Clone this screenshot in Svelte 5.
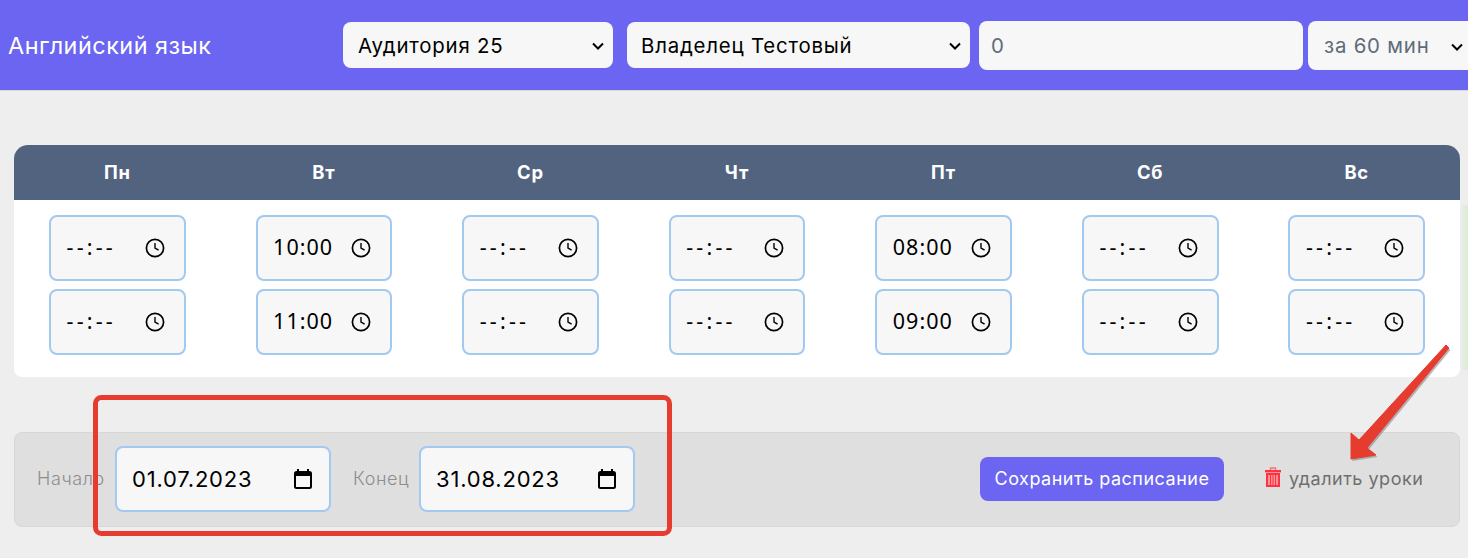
<script lang="ts">
  const days = [
    { name: "Пн", times: ["--:--", "--:--"] },
    { name: "Вт", times: ["10:00", "11:00"] },
    { name: "Ср", times: ["--:--", "--:--"] },
    { name: "Чт", times: ["--:--", "--:--"] },
    { name: "Пт", times: ["08:00", "09:00"] },
    { name: "Сб", times: ["--:--", "--:--"] },
    { name: "Вс", times: ["--:--", "--:--"] }
  ];
</script>

<div class="page">
  <header class="topbar">
    <div class="title">Английский язык</div>
    <select class="field room"><option>Аудитория 25</option></select>
    <select class="field owner"><option>Владелец Тестовый</option></select>
    <input class="field price" value="0" />
    <select class="field period"><option>за 60 мин</option></select>
  </header>

  <main class="content">
    <section class="schedule">
      <div class="head">
        {#each days as day}
          <div class="day-name">{day.name}</div>
        {/each}
      </div>
      <div class="body">
        {#each days as day}
          <div class="day">
            {#each day.times as time}
              <div class="time" class:empty={time === "--:--"}>
                <span class="value">{time}</span>
                <svg class="clock" viewBox="0 0 20 20" width="20" height="20">
                  <circle cx="10" cy="10" r="8.6" fill="none" stroke="#000" stroke-width="1.7" />
                  <path d="M10 5v5l3.6 2.2" fill="none" stroke="#000" stroke-width="1.4" />
                </svg>
              </div>
            {/each}
          </div>
        {/each}
      </div>
    </section>

    <section class="footer">
      <span class="label start">Начало</span>
      <div class="date">
        <span>01.07.2023</span>
        <svg viewBox="0 0 20 20" width="20" height="20">
          <path d="M5 0v3M15 0v3" stroke="#000" stroke-width="2" />
          <rect x="2" y="3" width="16" height="16" rx="1.5" fill="none" stroke="#000" stroke-width="2" />
          <rect x="2" y="3" width="16" height="4" fill="#000" />
        </svg>
      </div>
      <span class="label end">Конец</span>
      <div class="date">
        <span>31.08.2023</span>
        <svg viewBox="0 0 20 20" width="20" height="20">
          <path d="M5 0v3M15 0v3" stroke="#000" stroke-width="2" />
          <rect x="2" y="3" width="16" height="16" rx="1.5" fill="none" stroke="#000" stroke-width="2" />
          <rect x="2" y="3" width="16" height="4" fill="#000" />
        </svg>
      </div>
      <button class="save">Сохранить расписание</button>
      <span class="remove">
        <svg class="trash" viewBox="0 0 16 20" width="16" height="20">
          <path d="M5.5 3V1h5v2" fill="none" stroke="#f9707a" stroke-width="1.4" />
          <rect x="0" y="3" width="16" height="2.4" fill="#ff3340" />
          <rect x="2" y="7" width="12" height="12" fill="#ff8f98" stroke="#ff3340" stroke-width="2" />
          <path d="M5.5 8v10M8 8v10M10.5 8v10" stroke="#ff3340" stroke-width="1" />
        </svg>
        удалить уроки
      </span>
    </section>
  </main>

  <div class="edge"></div>

  <svg class="marks" viewBox="0 0 1468 558" width="1468" height="558">
    <rect x="95.5" y="397.5" width="574" height="136" rx="6" fill="none" stroke="#e53c2f" stroke-width="5" />
    <path d="M1446 345 L1359 440 L1351 433 L1351 459 L1376 455 L1367 448 L1449 348 Z" fill="#7f7f7f" transform="translate(1.5 2)" opacity="0.55" />
    <path d="M1446 345 L1359 440 L1351 433 L1351 459 L1376 455 L1367 448 L1449 348 Z" fill="#e53c2f" stroke="#e53c2f" stroke-width="1" stroke-linejoin="round" />
  </svg>
</div>

<style>
  :global(body) {
    margin: 0;
    overflow: hidden;
  }

  .page {
    position: relative;
    width: 1468px;
    height: 558px;
    overflow: hidden;
    background: #eeeeee;
    font-family: Inter, "Liberation Sans", sans-serif;
  }

  .topbar {
    display: flex;
    align-items: center;
    width: 1500px;
    height: 91px;
    box-sizing: border-box;
    padding-left: 8px;
    background: #6b65f1;
    border-bottom: 1px solid #d9d9d9;
  }

  .title {
    width: 335px;
    height: 46px;
    flex: none;
    color: #fff;
    font-size: 23.4px;
    letter-spacing: 0.5px;
    line-height: 48px;
  }

  .field {
    box-sizing: border-box;
    border: none;
    border-radius: 8px;
    background-color: #f7f7f7;
    font-family: inherit;
    font-size: 20.4px;
    letter-spacing: 0.8px;
    color: #000;
    flex: none;
  }

  select.field {
    appearance: none;
    background-repeat: no-repeat;
    background-size: 12px 8px;
    background-image: url("data:image/svg+xml,%3Csvg xmlns='http://www.w3.org/2000/svg' viewBox='0 0 12 8'%3E%3Cpath d='M1 1.5l5 5 5-5' fill='none' stroke='%23000' stroke-width='2'/%3E%3C/svg%3E");
  }

  .room { width: 270px; height: 46px; padding-left: 15px; background-position: 249px 20px; }
  .owner { width: 343px; height: 46px; margin-left: 14px; padding-left: 14px; background-position: 322px 20px; }
  .price {
    width: 324px;
    height: 49px;
    margin-left: 9px;
    padding: 0 12px;
    color: #5f6b7a;
  }
  select.period {
    width: 168px;
    height: 49px;
    margin-left: 5px;
    padding-left: 16px;
    color: #5f6b7a;
    background-position: 143px 22px;
  }

  .content {
    padding: 54px 8px 0 14px;
  }

  .schedule {
    background: #fff;
    border-radius: 14px 14px 8px 8px;
    overflow: hidden;
  }

  .head {
    display: grid;
    grid-template-columns: repeat(7, 1fr);
    height: 55px;
    background: #52637f;
  }

  .day-name {
    text-align: center;
    line-height: 55px;
    color: #fff;
    font-size: 18.4px;
    letter-spacing: 0.8px;
    font-weight: 700;
  }

  .body {
    display: grid;
    grid-template-columns: repeat(7, 1fr);
    height: 177px;
    padding-top: 15px;
    box-sizing: border-box;
  }

  .day {
    display: flex;
    flex-direction: column;
    align-items: center;
    gap: 8px;
    padding-left: 0.2px;
  }

  .time {
    display: flex;
    align-items: center;
    justify-content: space-between;
    box-sizing: border-box;
    width: 136.7px;
    height: 66px;
    padding: 0 19px 0 15.5px;
    background: #f7f7f7;
    border: 2px solid #a2c9f1;
    border-radius: 8px;
    font-size: 21.5px;
    letter-spacing: 1px;
    color: #000;
    font-family: "Noto Sans", Inter, sans-serif;
  }

  .time .value {
    margin-top: -3px;
  }

  .time.empty .value {
    letter-spacing: 3.2px;
  }

  .footer {
    display: flex;
    align-items: center;
    height: 95px;
    margin-top: 55px;
    box-sizing: border-box;
    padding: 0 0 2px 22px;
    background: #dfdfdf;
    border: 1px solid #d7d7d7;
    border-radius: 8px;
  }

  .label {
    font-size: 18px;
    letter-spacing: 0.6px;
    font-weight: 300;
    color: #8e8e8e;
  }

  .start { width: 78px; }
  .end { margin-left: 22px; width: 66px; }

  .date {
    display: flex;
    align-items: center;
    justify-content: space-between;
    box-sizing: border-box;
    width: 216px;
    height: 66px;
    padding: 0 16px 0 15px;
    background: #f7f7f7;
    border: 2px solid #a2c9f1;
    border-radius: 8px;
    font-size: 22px;
    letter-spacing: 0.8px;
    color: #000;
  }

  .save {
    width: 244px;
    height: 44px;
    margin-left: 345px;
    border: none;
    border-radius: 8px;
    background: #6b65f1;
    color: #fff;
    font-family: inherit;
    font-size: 18px;
    letter-spacing: 0.5px;
  }

  .remove {
    display: flex;
    align-items: center;
    gap: 8px;
    margin-left: 41px;
    font-size: 18px;
    letter-spacing: 0.5px;
    color: #6f6f6f;
  }

  .trash {
    margin-top: -3px;
  }

  /* faint green strip bleeding in at the right edge */
  .edge {
    position: absolute;
    top: 205px;
    right: 0;
    width: 6px;
    height: 165px;
    background: linear-gradient(90deg, #e6eee4, #dcecd8);
  }

  .marks {
    position: absolute;
    top: 0;
    left: 0;
    pointer-events: none;
  }
</style>
